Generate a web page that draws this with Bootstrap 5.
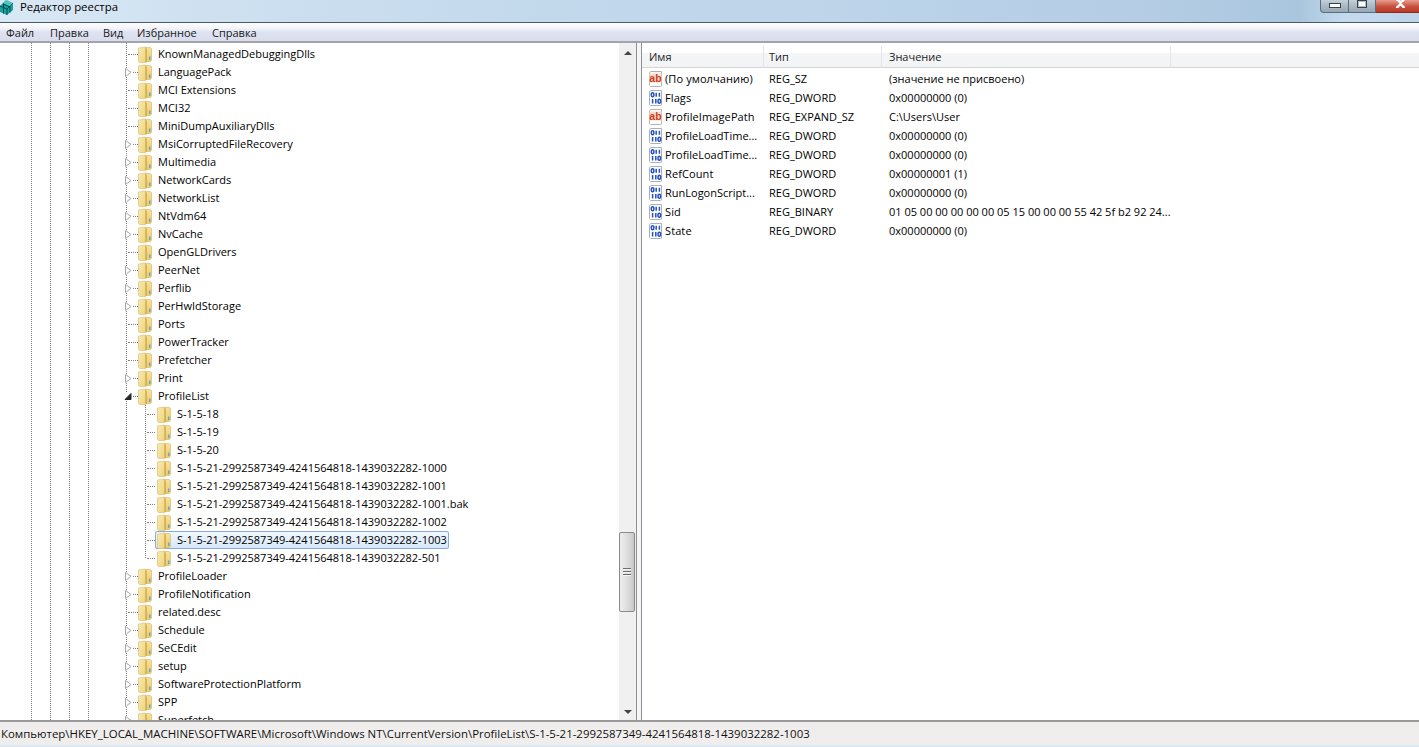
<!DOCTYPE html>
<html lang="ru">
<head>
<meta charset="utf-8">
<title>Редактор реестра</title>
<link href="https://cdn.jsdelivr.net/npm/bootstrap@5.3.0/dist/css/bootstrap.min.css" rel="stylesheet">
<style>
html,body{height:100%;margin:0;overflow:hidden}
body{font-family:"Open Sans","Noto Sans",sans-serif;font-size:11px;line-height:18px;color:#000;background:#fff}
.win{height:747px;width:1419px}
.ttl{height:23px;flex:none;border-bottom:1px solid #4d5a66;background:linear-gradient(90deg,#d9e8f5 0,#cfe1f1 200px,#c3d9ec 520px,#bed5ea 800px,#b4cde5 1150px,#a9c6de 1300px,#c6daee 1345px,#bdd4e9 1419px)}
.ttl-name{padding-left:6px;line-height:14px;font-size:11.4px}
.ttl-ico{width:14px;height:15px;display:block}
.wbtns{height:13px}
.wb{height:13px;border:1px solid #5b6e80;border-top:0;border-left-width:0;background:linear-gradient(#c4d0da,#a9b8c4 50%,#97a8b5);display:flex;align-items:flex-end;justify-content:center;padding-bottom:4px}
.wb-min{width:29px;border-left-width:1px;border-bottom-left-radius:4px}
.wb-max{width:27px}
.wb-cls{width:43px;background:linear-gradient(#e89d8f,#c84f3d 55%,#b93a2a);border-color:#8c2a20;border-right:0;padding-left:5px}
.gl-min{width:12px;height:5px;background:#fff;border:1px solid #39434c}
.gl-max{width:10px;height:8px;background:#fff;border:1px solid #39434c;box-shadow:inset 0 0 0 1px #aebcc8}
.gl-cls{width:11px;height:9px;display:block}
.mnu{height:20px;flex:none;background:linear-gradient(#fcfdfe 0,#f2f4f9 30%,#dfe3f1 50%,#d8dded 100%);border-bottom:2px solid #a3a3a8;line-height:19px;padding-left:6px;color:#1a1a1a}
.mnu span:nth-child(1){width:44px}
.mnu span:nth-child(2){width:53px}
.mnu span:nth-child(3){width:34px}
.mnu span:nth-child(4){width:75px}
.mnu span{display:block}
.main{min-height:0}
.lft{width:636px;flex:none}
.tree{width:619px;flex:none;padding-top:2px;position:relative;background-image:linear-gradient(#7f7f7f 50%,transparent 50%),linear-gradient(#7f7f7f 50%,transparent 50%),linear-gradient(#7f7f7f 50%,transparent 50%),linear-gradient(#7f7f7f 50%,transparent 50%),linear-gradient(#7f7f7f 50%,transparent 50%);background-size:1px 2px;background-repeat:repeat-y;background-position:31px 0,50px 0,69px 0,88px 0,126px 0}
.rw{height:18px;position:relative;padding-left:128px;white-space:nowrap}
.cn{width:10px;height:0;border-top:1px dotted #7f7f7f;flex:none;margin-top:1px}
.fld{width:15px;height:17px;flex:none;display:block}
.lb1{padding-left:5px}
.arw{position:absolute;left:124px;top:5px;width:8px;height:9px;display:block;background:#fff}
.subs{position:relative}
.subs::before{content:"";position:absolute;left:145px;top:0;bottom:9px;border-left:1px dotted #7f7f7f}
.rw2{padding-left:147px}
.cn2{width:8px}
.nbox{height:18px;padding-left:2px;padding-right:2px;border:1px solid transparent;border-left-width:0;border-right-width:0}
.nbox .lb1{padding-left:5px}
.nsel{background:linear-gradient(#f2f8fe,#d6e8fb);border:1px solid #84acdd;border-radius:2px;padding-left:1px;padding-right:1px}
.sb{width:17px;flex:none;background:#f0f0f0;position:relative}
.sb-up{height:20px;flex:none}
.sb-dn{height:17px;flex:none}
.sb-sp{height:469px;flex:none}
.sb-th{height:80px;flex:none;background:linear-gradient(90deg,#eeeeee,#dedede 50%,#c8c8c8);border:1px solid #8a8a8a;border-radius:2px;margin:0 1px 0 0}
.sb-gr{width:8px;height:9px;background:repeating-linear-gradient(#6d6d6d 0 1px,#f4f4f4 1px 2px,transparent 2px 3px)}
.tri-u{width:0;height:0;border:4px solid transparent;border-top:0;border-bottom-color:#444}
.tri-d{width:0;height:0;border:4px solid transparent;border-bottom:0;border-top-color:#444}
.spl{width:6px;flex:none;border-left:1px solid #8d9097;border-right:1px solid #8d9097;background:#f6f6f6}
.rgt{min-width:0}
.hd{height:25px;flex:none;padding-top:3px;background:linear-gradient(#fff 0,#fff 40%,#f4f5f7 40%,#f3f4f6 100%);border-bottom:1px solid #d5d5d5;line-height:22px;color:#222;margin-bottom:1px}
.c1{width:122px;padding-left:7px;flex:none}
.c2{width:118px;padding-left:5px;flex:none}
.c3{width:289px;padding-left:7px;flex:none}
.hd>div{border-right:1px solid #e3e4e6;height:22px}
.rrw{height:19px;line-height:19px}
.rrw .c1{padding-left:6px}
.nm{letter-spacing:.1px}
.ic{width:15px;height:16px;flex:none;display:block}
.lb0{padding-left:2px}
.stb{height:27px;flex:none;background:#f0eeec;border-top:2px solid #9a9a9a;border-bottom:2px solid #dce8f4;line-height:24px;padding-left:1px;color:#111;font-size:11.45px}
</style>
</head>
<body>
<svg width="0" height="0" class="d-block" style="position:absolute" aria-hidden="true">
<defs>
<linearGradient id="fa" x1="0" y1="0" x2="1" y2="1"><stop offset="0" stop-color="#f8eab0"/><stop offset="1" stop-color="#f0d47e"/></linearGradient>
<linearGradient id="fb" x1="0" y1="0" x2="0" y2="1"><stop offset="0" stop-color="#f7e29a"/><stop offset="1" stop-color="#eec965"/></linearGradient>
<symbol id="f" viewBox="0 0 15 17">
<path d="M7 1.500h5l1.500 1v11.500l-1 1.500H7z" fill="url(#fb)" stroke="#d9bd6c" stroke-width=".7"/>
<path d="M.5 2 7.500 1v15.500H1.500l-1-1z" fill="url(#fa)" stroke="#dcc27a" stroke-width=".7"/>
<path d="M7.500 1.300 8.800 3v13.300H7.500z" fill="#cfa94f"/>
<rect x="11" y="10.500" width="1.500" height="3.500" fill="#5fa8d8"/>
</symbol>
<symbol id="bn" viewBox="0 0 15 16">
<path d="M1.500 1.500 3 .5h10.500v14.500l-1 .5H2.500l-1-1z" fill="#fff" stroke="#a9b1bd"/>
<g fill="none" stroke="#2450c0" stroke-width="1.500"><ellipse cx="4.600" cy="4.800" rx="1.300" ry="2"/><path d="M8.200 2.700v4M11.400 2.700v4"/><path d="M4.600 9v4.400M7.800 9v4.400"/><ellipse cx="11.300" cy="11.200" rx="1.300" ry="2"/></g>
</symbol>
<symbol id="ab" viewBox="0 0 15 16">
<path d="M1.500 1.500 3 .5h10.500v14.500l-1 .5H2.500l-1-1z" fill="#fff" stroke="#b7b2ad"/>
<rect x="1.500" y="2.500" width="12" height="9" fill="#f9dcd0"/>
<text x="7.500" y="10.500" text-anchor="middle" font-family="Liberation Sans,sans-serif" font-weight="700" font-size="10.500" fill="#cf3f1c">ab</text>
</symbol>
</defs>
</svg>
<div class="win d-flex flex-column overflow-hidden">
  <div class="ttl d-flex justify-content-between">
    <div class="d-flex">
      <svg class="ttl-ico" viewBox="0 0 14 15"><path d="M0 6 6 0l7 3v7l-6 5-7-3z" fill="#12a3a0"/><path d="M0 6l7 3 6-6M7 9v6M3 4l7 3M3.500 3.500 3.500 13.500M10 6v6.500" stroke="#063f44" stroke-width=".9" fill="none"/><path d="M6 0 3 3l7 3 3-3z" fill="#7fe0dd" opacity=".55"/></svg>
      <div class="ttl-name">Редактор реестра</div>
    </div>
    <div class="wbtns d-flex">
      <div class="wb wb-min"><i class="gl-min"></i></div>
      <div class="wb wb-max"><i class="gl-max"></i></div>
      <div class="wb wb-cls"><svg class="gl-cls" viewBox="0 0 11 9"><path d="M1.500 0 5.500 3.500 9.500 0 M1.500 9 5.500 5 9.500 9 M5.500 3.500v2" stroke="#fff" stroke-width="2.400" fill="none"/></svg></div>
    </div>
  </div>
  <div class="mnu d-flex"><span>Файл</span><span>Правка</span><span>Вид</span><span>Избранное</span><span>Справка</span></div>
  <div class="main d-flex flex-grow-1 overflow-hidden">
    <div class="lft d-flex">
      <div class="tree overflow-hidden">
        <div class="rw d-flex align-items-center"><i class="cn"></i><svg class="fld"><use href="#f"/></svg><span class="lb1">KnownManagedDebuggingDlls</span></div>
        <div class="rw d-flex align-items-center"><svg class="arw" viewBox="0 0 8 9"><path d="M1.500 .5 7 4.500 1.500 8.500z" fill="#fff" stroke="#a6a6a6"/></svg><i class="cn"></i><svg class="fld"><use href="#f"/></svg><span class="lb1">LanguagePack</span></div>
        <div class="rw d-flex align-items-center"><i class="cn"></i><svg class="fld"><use href="#f"/></svg><span class="lb1">MCI Extensions</span></div>
        <div class="rw d-flex align-items-center"><i class="cn"></i><svg class="fld"><use href="#f"/></svg><span class="lb1">MCI32</span></div>
        <div class="rw d-flex align-items-center"><i class="cn"></i><svg class="fld"><use href="#f"/></svg><span class="lb1">MiniDumpAuxiliaryDlls</span></div>
        <div class="rw d-flex align-items-center"><svg class="arw" viewBox="0 0 8 9"><path d="M1.500 .5 7 4.500 1.500 8.500z" fill="#fff" stroke="#a6a6a6"/></svg><i class="cn"></i><svg class="fld"><use href="#f"/></svg><span class="lb1">MsiCorruptedFileRecovery</span></div>
        <div class="rw d-flex align-items-center"><svg class="arw" viewBox="0 0 8 9"><path d="M1.500 .5 7 4.500 1.500 8.500z" fill="#fff" stroke="#a6a6a6"/></svg><i class="cn"></i><svg class="fld"><use href="#f"/></svg><span class="lb1">Multimedia</span></div>
        <div class="rw d-flex align-items-center"><svg class="arw" viewBox="0 0 8 9"><path d="M1.500 .5 7 4.500 1.500 8.500z" fill="#fff" stroke="#a6a6a6"/></svg><i class="cn"></i><svg class="fld"><use href="#f"/></svg><span class="lb1">NetworkCards</span></div>
        <div class="rw d-flex align-items-center"><svg class="arw" viewBox="0 0 8 9"><path d="M1.500 .5 7 4.500 1.500 8.500z" fill="#fff" stroke="#a6a6a6"/></svg><i class="cn"></i><svg class="fld"><use href="#f"/></svg><span class="lb1">NetworkList</span></div>
        <div class="rw d-flex align-items-center"><svg class="arw" viewBox="0 0 8 9"><path d="M1.500 .5 7 4.500 1.500 8.500z" fill="#fff" stroke="#a6a6a6"/></svg><i class="cn"></i><svg class="fld"><use href="#f"/></svg><span class="lb1">NtVdm64</span></div>
        <div class="rw d-flex align-items-center"><svg class="arw" viewBox="0 0 8 9"><path d="M1.500 .5 7 4.500 1.500 8.500z" fill="#fff" stroke="#a6a6a6"/></svg><i class="cn"></i><svg class="fld"><use href="#f"/></svg><span class="lb1">NvCache</span></div>
        <div class="rw d-flex align-items-center"><i class="cn"></i><svg class="fld"><use href="#f"/></svg><span class="lb1">OpenGLDrivers</span></div>
        <div class="rw d-flex align-items-center"><svg class="arw" viewBox="0 0 8 9"><path d="M1.500 .5 7 4.500 1.500 8.500z" fill="#fff" stroke="#a6a6a6"/></svg><i class="cn"></i><svg class="fld"><use href="#f"/></svg><span class="lb1">PeerNet</span></div>
        <div class="rw d-flex align-items-center"><svg class="arw" viewBox="0 0 8 9"><path d="M1.500 .5 7 4.500 1.500 8.500z" fill="#fff" stroke="#a6a6a6"/></svg><i class="cn"></i><svg class="fld"><use href="#f"/></svg><span class="lb1">Perflib</span></div>
        <div class="rw d-flex align-items-center"><svg class="arw" viewBox="0 0 8 9"><path d="M1.500 .5 7 4.500 1.500 8.500z" fill="#fff" stroke="#a6a6a6"/></svg><i class="cn"></i><svg class="fld"><use href="#f"/></svg><span class="lb1">PerHwIdStorage</span></div>
        <div class="rw d-flex align-items-center"><i class="cn"></i><svg class="fld"><use href="#f"/></svg><span class="lb1">Ports</span></div>
        <div class="rw d-flex align-items-center"><i class="cn"></i><svg class="fld"><use href="#f"/></svg><span class="lb1">PowerTracker</span></div>
        <div class="rw d-flex align-items-center"><i class="cn"></i><svg class="fld"><use href="#f"/></svg><span class="lb1">Prefetcher</span></div>
        <div class="rw d-flex align-items-center"><svg class="arw" viewBox="0 0 8 9"><path d="M1.500 .5 7 4.500 1.500 8.500z" fill="#fff" stroke="#a6a6a6"/></svg><i class="cn"></i><svg class="fld"><use href="#f"/></svg><span class="lb1">Print</span></div>
        <div class="rw d-flex align-items-center"><svg class="arw" viewBox="0 0 8 9"><path d="M7 1.500 7 7.500 1 7.500z" fill="#262626" stroke="#262626"/></svg><i class="cn"></i><svg class="fld"><use href="#f"/></svg><span class="lb1">ProfileList</span></div>
        <div class="subs">
          <div class="rw rw2 d-flex align-items-center"><i class="cn cn2"></i><div class="nbox d-flex align-items-center"><svg class="fld"><use href="#f"/></svg><span class="lb1">S-1-5-18</span></div></div>
          <div class="rw rw2 d-flex align-items-center"><i class="cn cn2"></i><div class="nbox d-flex align-items-center"><svg class="fld"><use href="#f"/></svg><span class="lb1">S-1-5-19</span></div></div>
          <div class="rw rw2 d-flex align-items-center"><i class="cn cn2"></i><div class="nbox d-flex align-items-center"><svg class="fld"><use href="#f"/></svg><span class="lb1">S-1-5-20</span></div></div>
          <div class="rw rw2 d-flex align-items-center"><i class="cn cn2"></i><div class="nbox d-flex align-items-center"><svg class="fld"><use href="#f"/></svg><span class="lb1">S-1-5-21-2992587349-4241564818-1439032282-1000</span></div></div>
          <div class="rw rw2 d-flex align-items-center"><i class="cn cn2"></i><div class="nbox d-flex align-items-center"><svg class="fld"><use href="#f"/></svg><span class="lb1">S-1-5-21-2992587349-4241564818-1439032282-1001</span></div></div>
          <div class="rw rw2 d-flex align-items-center"><i class="cn cn2"></i><div class="nbox d-flex align-items-center"><svg class="fld"><use href="#f"/></svg><span class="lb1">S-1-5-21-2992587349-4241564818-1439032282-1001.bak</span></div></div>
          <div class="rw rw2 d-flex align-items-center"><i class="cn cn2"></i><div class="nbox d-flex align-items-center"><svg class="fld"><use href="#f"/></svg><span class="lb1">S-1-5-21-2992587349-4241564818-1439032282-1002</span></div></div>
          <div class="rw rw2 d-flex align-items-center"><i class="cn cn2"></i><div class="nbox nsel d-flex align-items-center"><svg class="fld"><use href="#f"/></svg><span class="lb1">S-1-5-21-2992587349-4241564818-1439032282-1003</span></div></div>
          <div class="rw rw2 d-flex align-items-center"><i class="cn cn2"></i><div class="nbox d-flex align-items-center"><svg class="fld"><use href="#f"/></svg><span class="lb1">S-1-5-21-2992587349-4241564818-1439032282-501</span></div></div>
        </div>
        <div class="rw d-flex align-items-center"><svg class="arw" viewBox="0 0 8 9"><path d="M1.500 .5 7 4.500 1.500 8.500z" fill="#fff" stroke="#a6a6a6"/></svg><i class="cn"></i><svg class="fld"><use href="#f"/></svg><span class="lb1">ProfileLoader</span></div>
        <div class="rw d-flex align-items-center"><svg class="arw" viewBox="0 0 8 9"><path d="M1.500 .5 7 4.500 1.500 8.500z" fill="#fff" stroke="#a6a6a6"/></svg><i class="cn"></i><svg class="fld"><use href="#f"/></svg><span class="lb1">ProfileNotification</span></div>
        <div class="rw d-flex align-items-center"><i class="cn"></i><svg class="fld"><use href="#f"/></svg><span class="lb1">related.desc</span></div>
        <div class="rw d-flex align-items-center"><svg class="arw" viewBox="0 0 8 9"><path d="M1.500 .5 7 4.500 1.500 8.500z" fill="#fff" stroke="#a6a6a6"/></svg><i class="cn"></i><svg class="fld"><use href="#f"/></svg><span class="lb1">Schedule</span></div>
        <div class="rw d-flex align-items-center"><svg class="arw" viewBox="0 0 8 9"><path d="M1.500 .5 7 4.500 1.500 8.500z" fill="#fff" stroke="#a6a6a6"/></svg><i class="cn"></i><svg class="fld"><use href="#f"/></svg><span class="lb1">SeCEdit</span></div>
        <div class="rw d-flex align-items-center"><svg class="arw" viewBox="0 0 8 9"><path d="M1.500 .5 7 4.500 1.500 8.500z" fill="#fff" stroke="#a6a6a6"/></svg><i class="cn"></i><svg class="fld"><use href="#f"/></svg><span class="lb1">setup</span></div>
        <div class="rw d-flex align-items-center"><svg class="arw" viewBox="0 0 8 9"><path d="M1.500 .5 7 4.500 1.500 8.500z" fill="#fff" stroke="#a6a6a6"/></svg><i class="cn"></i><svg class="fld"><use href="#f"/></svg><span class="lb1">SoftwareProtectionPlatform</span></div>
        <div class="rw d-flex align-items-center"><svg class="arw" viewBox="0 0 8 9"><path d="M1.500 .5 7 4.500 1.500 8.500z" fill="#fff" stroke="#a6a6a6"/></svg><i class="cn"></i><svg class="fld"><use href="#f"/></svg><span class="lb1">SPP</span></div>
        <div class="rw d-flex align-items-center"><svg class="arw" viewBox="0 0 8 9"><path d="M1.500 .5 7 4.500 1.500 8.500z" fill="#fff" stroke="#a6a6a6"/></svg><i class="cn"></i><svg class="fld"><use href="#f"/></svg><span class="lb1">Superfetch</span></div>
      </div>
      <div class="sb d-flex flex-column align-items-center">
        <div class="sb-up d-flex align-items-center justify-content-center"><i class="tri-u"></i></div>
        <div class="sb-sp"></div>
        <div class="sb-th d-flex align-items-center justify-content-center align-self-stretch"><i class="sb-gr"></i></div>
        <div class="flex-grow-1"></div>
        <div class="sb-dn d-flex align-items-center justify-content-center"><i class="tri-d"></i></div>
      </div>
    </div>
    <div class="spl"></div>
    <div class="rgt flex-grow-1">
      <div class="hd d-flex"><div class="c1">Имя</div><div class="c2">Тип</div><div class="c3">Значение</div></div>
      <div class="rrw d-flex"><div class="c1 d-flex align-items-center"><svg class="ic"><use href="#ab"/></svg><span class="lb0 nm">(По умолчанию)</span></div><div class="c2">REG_SZ</div><div class="c3 text-nowrap">(значение не присвоено)</div></div>
      <div class="rrw d-flex"><div class="c1 d-flex align-items-center"><svg class="ic"><use href="#bn"/></svg><span class="lb0 nm">Flags</span></div><div class="c2">REG_DWORD</div><div class="c3 text-nowrap">0x00000000 (0)</div></div>
      <div class="rrw d-flex"><div class="c1 d-flex align-items-center"><svg class="ic"><use href="#ab"/></svg><span class="lb0 nm">ProfileImagePath</span></div><div class="c2">REG_EXPAND_SZ</div><div class="c3 text-nowrap">C:\Users\User</div></div>
      <div class="rrw d-flex"><div class="c1 d-flex align-items-center"><svg class="ic"><use href="#bn"/></svg><span class="lb0">ProfileLoadTime...</span></div><div class="c2">REG_DWORD</div><div class="c3 text-nowrap">0x00000000 (0)</div></div>
      <div class="rrw d-flex"><div class="c1 d-flex align-items-center"><svg class="ic"><use href="#bn"/></svg><span class="lb0">ProfileLoadTime...</span></div><div class="c2">REG_DWORD</div><div class="c3 text-nowrap">0x00000000 (0)</div></div>
      <div class="rrw d-flex"><div class="c1 d-flex align-items-center"><svg class="ic"><use href="#bn"/></svg><span class="lb0 nm">RefCount</span></div><div class="c2">REG_DWORD</div><div class="c3 text-nowrap">0x00000001 (1)</div></div>
      <div class="rrw d-flex"><div class="c1 d-flex align-items-center"><svg class="ic"><use href="#bn"/></svg><span class="lb0">RunLogonScript...</span></div><div class="c2">REG_DWORD</div><div class="c3 text-nowrap">0x00000000 (0)</div></div>
      <div class="rrw d-flex"><div class="c1 d-flex align-items-center"><svg class="ic"><use href="#bn"/></svg><span class="lb0 nm">Sid</span></div><div class="c2">REG_BINARY</div><div class="c3 text-nowrap">01 05 00 00 00 00 00 05 15 00 00 00 55 42 5f b2 92 24...</div></div>
      <div class="rrw d-flex"><div class="c1 d-flex align-items-center"><svg class="ic"><use href="#bn"/></svg><span class="lb0 nm">State</span></div><div class="c2">REG_DWORD</div><div class="c3 text-nowrap">0x00000000 (0)</div></div>
    </div>
  </div>
  <div class="stb">Компьютер\HKEY_LOCAL_MACHINE\SOFTWARE\Microsoft\Windows NT\CurrentVersion\ProfileList\S-1-5-21-2992587349-4241564818-1439032282-1003</div>
</div>
</body>
</html>
